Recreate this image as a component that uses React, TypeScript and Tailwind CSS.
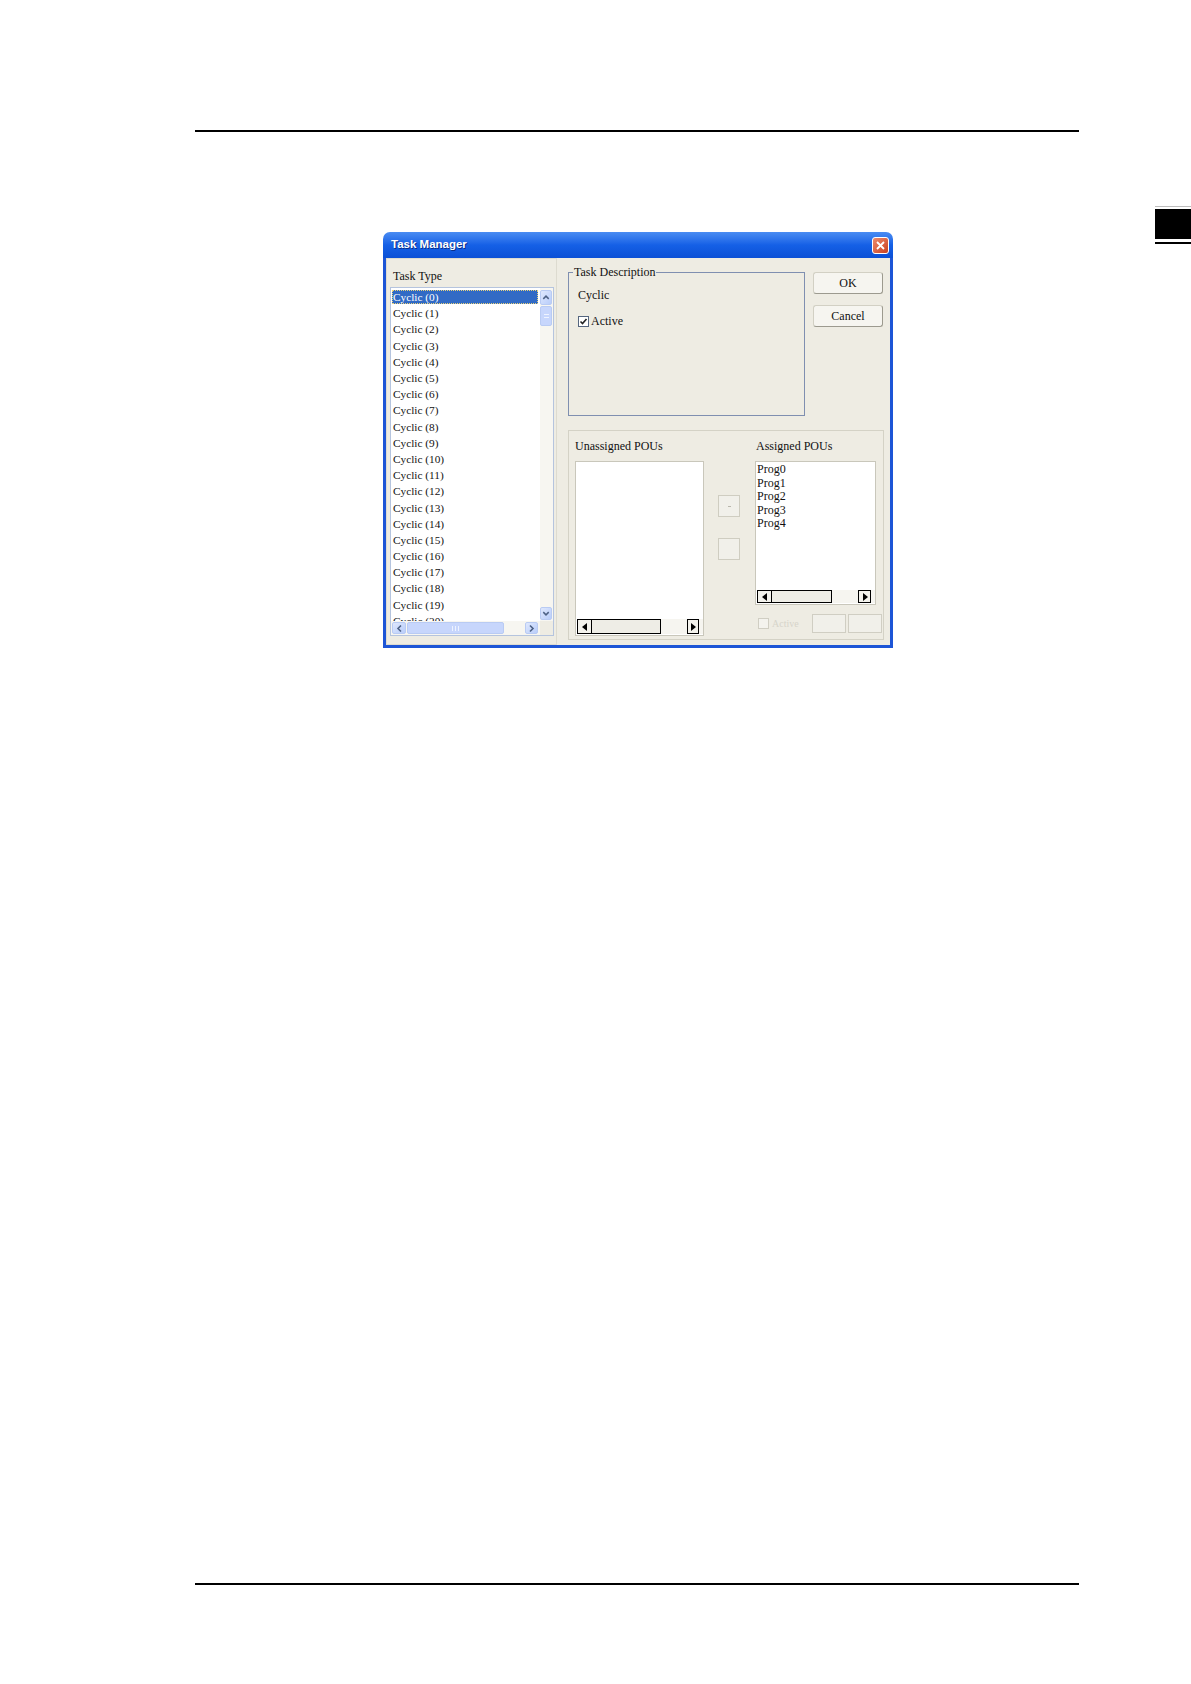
import React from 'react';

const serif = { fontFamily: '"Liberation Serif", "Times New Roman", serif' };
const rows = Array.from({ length: 21 }, (_, i) => `Cyclic (${i})`);
const progs = ['Prog0', 'Prog1', 'Prog2', 'Prog3', 'Prog4'];

function XpArrow({ dir }: { dir: 'up' | 'down' | 'left' | 'right' }) {
  const d = {
    up: 'M2.5 7 L5.5 4 L8.5 7',
    down: 'M2.5 4 L5.5 7 L8.5 4',
    left: 'M7 2.5 L4 5.5 L7 8.5',
    right: 'M4 2.5 L7 5.5 L4 8.5',
  }[dir];
  return (
    <svg width="11" height="11" viewBox="0 0 11 11">
      <path d={d} fill="none" stroke="#4d6185" strokeWidth="1.6" />
    </svg>
  );
}

function XpBtn({ dir, className }: { dir: 'up' | 'down' | 'left' | 'right'; className: string }) {
  return (
    <div className={`flex items-center justify-center rounded-[2px] border border-[#b9cbf3] bg-gradient-to-br from-[#dfe8fd] to-[#b9cdfa] ${className}`}>
      <XpArrow dir={dir} />
    </div>
  );
}

function Tri({ dir }: { dir: 'left' | 'right' }) {
  return (
    <svg width="6" height="8" viewBox="0 0 6 8">
      <path d={dir === 'left' ? 'M5 0 L0 4 L5 8 Z' : 'M1 0 L6 4 L1 8 Z'} fill="#000" />
    </svg>
  );
}

function ClassicHScroll({ thumb, right, h }: { thumb: string; right: string; h: string }) {
  return (
    <div className={`flex items-stretch ${h} bg-[#f6f5f0]`}>
      <div className="flex w-[15px] items-center justify-center border border-black bg-[#f3f2ec]">
        <Tri dir="left" />
      </div>
      <div className={`${thumb} border border-l-0 border-black bg-[#eeede6]`} />
      <div className="flex-1" />
      <div className={`flex ${right} items-center justify-center border border-black bg-[#f3f2ec]`}>
        <Tri dir="right" />
      </div>
      <div className="w-[4px]" />
    </div>
  );
}

function TaskTypeList() {
  return (
    <div className="grid h-[349px] w-[164px] grid-cols-[1fr_13px] grid-rows-[1fr_14px] border border-[#b5c4de] bg-white">
      <div className="overflow-hidden pl-[1px] pt-[1px] text-[11.3px] text-[#111]" style={serif}>
        {rows.map((r, i) => (
          <div key={r} className="flex h-[16.2px] items-center">
            {i === 0 ? (
              <div className="mr-[2px] flex h-[14px] w-full items-center border border-dotted border-[#e9d27a] bg-[#316ac5] text-white">
                {r}
              </div>
            ) : (
              <div className="pl-[1px] leading-[14px]">{r}</div>
            )}
          </div>
        ))}
      </div>
      <div className="flex flex-col bg-[#f7f6f1] pt-[2px]">
        <XpBtn dir="up" className="h-[15px] w-[12px]" />
        <div className="mt-[1px] flex h-[20px] w-[12px] flex-col items-center justify-center gap-[2px] rounded-[2px] border border-[#b9cbf3] bg-[#c7d6fc]">
          <div className="h-px w-[5px] bg-[#eef3ff]" />
          <div className="h-px w-[5px] bg-[#eef3ff]" />
        </div>
        <div className="flex-1" />
        <XpBtn dir="down" className="mb-[1px] h-[13px] w-[12px]" />
      </div>
      <div className="flex items-stretch bg-[#f7f6f1] py-[1px]">
        <XpBtn dir="left" className="ml-[1px] w-[14px]" />
        <div className="ml-[1px] flex w-[97px] items-center justify-center gap-[2px] rounded-[2px] border border-[#b9cbf3] bg-[#c7d6fc]">
          <div className="h-[5px] w-px bg-[#eef3ff]" />
          <div className="h-[5px] w-px bg-[#eef3ff]" />
          <div className="h-[5px] w-px bg-[#eef3ff]" />
        </div>
        <div className="flex-1" />
        <XpBtn dir="right" className="mr-[2px] w-[13px]" />
      </div>
      <div className="bg-[#eeece3]" />
    </div>
  );
}

function XpButton({ label, className }: { label: string; className: string }) {
  return (
    <div
      className={`flex h-[22px] w-[70px] items-center justify-center rounded-[3px] border border-[#d2d0c4] border-b-[#9c9a8f] border-r-[#9c9a8f] bg-[#f6f5f0] text-[12px] text-[#111] ${className}`}
      style={serif}
    >
      {label}
    </div>
  );
}

function TaskManagerDialog() {
  return (
    <div className="flex h-[416px] w-[510px] flex-col">
      <div className="flex h-[26px] items-center justify-between rounded-t-[7px] bg-gradient-to-b from-[#4a8cf2] via-[#1560e6] to-[#0b50d6] pl-[8px] pr-[4px]">
        <span
          className="text-[11.5px] font-bold text-white [text-shadow:1px_1px_0_#0a2f8a]"
          style={{ fontFamily: '"Liberation Sans", Arial, sans-serif' }}
        >
          Task Manager
        </span>
        <div className="flex h-[17px] w-[17px] items-center justify-center rounded-[3px] border border-white bg-gradient-to-br from-[#ee8a6c] to-[#c9401c]">
          <svg width="9" height="9" viewBox="0 0 9 9">
            <path d="M1 1 L8 8 M8 1 L1 8" stroke="#fff" strokeWidth="1.8" />
          </svg>
        </div>
      </div>
      <div className="flex flex-1 border-x-[3px] border-b-[3px] border-[#1d55d6] bg-[#eeece3]">
        <div className="flex w-[171px] flex-col border border-[#dddbd0] pl-[3px] pt-[9px]">
          <div className="h-[16px] pl-[3px] text-[12px] leading-[16px] text-[#111]" style={serif}>
            Task Type
          </div>
          <div className="mt-[3px]">
            <TaskTypeList />
          </div>
        </div>
        <div className="flex flex-1 flex-col pl-[11px] pt-[6px]">
          <div className="flex items-start gap-[8px]">
            <fieldset className="h-[152px] w-[237px] border border-[#7f8fb0] pl-[9px]">
              <legend className="-ml-[5px] px-[1px] text-[12px] leading-[16px] text-[#111]" style={serif}>
                Task Description
              </legend>
              <div className="pt-[7px] text-[12px] leading-[16px] text-[#111]" style={serif}>
                Cyclic
              </div>
              <div className="mt-[10px] flex h-[16px] items-center gap-[2px]">
                <div className="flex h-[11px] w-[11px] items-center justify-center border border-[#55667f] bg-white">
                  <svg width="9" height="9" viewBox="0 0 9 9">
                    <path d="M1.5 4.5 L3.5 6.5 L7.5 2" fill="none" stroke="#222" strokeWidth="1.6" />
                  </svg>
                </div>
                <span className="text-[12px] leading-[16px] text-[#111]" style={serif}>
                  Active
                </span>
              </div>
            </fieldset>
            <div className="flex flex-col">
              <XpButton label="OK" className="mt-[8px]" />
              <XpButton label="Cancel" className="mt-[11px]" />
            </div>
          </div>
          <div className="mt-[14px] flex h-[210px] w-[316px] border border-[#d4d2c6] pl-[6px] pt-[7px]">
            <div className="flex w-[129px] flex-col">
              <div className="h-[16px] text-[12px] leading-[16px] text-[#111]" style={serif}>
                Unassigned POUs
              </div>
              <div className="mt-[7px] flex h-[175px] flex-col justify-end border border-[#c9c7bb] bg-white pb-[1px] pl-[1px]">
                <ClassicHScroll thumb="w-[69px]" right="w-[12px]" h="h-[15px]" />
              </div>
            </div>
            <div className="ml-[14px] flex w-[22px] flex-col pt-[57px]">
              <div className="flex h-[22px] w-[22px] items-center justify-center border border-[#cfcdc1] bg-[#f1f0ea]">
                <div className="h-px w-[3px] bg-[#b9b7ac]" />
              </div>
              <div className="mt-[21px] h-[22px] w-[22px] border border-[#cfcdc1] bg-[#f1f0ea]" />
            </div>
            <div className="ml-[15px] flex w-[128px] flex-col">
              <div className="h-[16px] pl-[1px] text-[12px] leading-[16px] text-[#111]" style={serif}>
                Assigned POUs
              </div>
              <div className="mt-[7px] flex h-[144px] w-[121px] flex-col border border-[#c9c7bb] bg-white pb-[1px] pl-[1px]">
                <div className="flex-1 pt-[1px] text-[12px] leading-[13.5px] text-[#111]" style={serif}>
                  {progs.map((p) => (
                    <div key={p}>{p}</div>
                  ))}
                </div>
                <ClassicHScroll thumb="w-[60px]" right="w-[13px]" h="h-[13px]" />
              </div>
              <div className="mt-[9px] flex h-[19px] items-center">
                <div className="ml-[3px] h-[11px] w-[11px] border border-[#d0cec3] bg-[#f4f3ee]" />
                <span className="ml-[3px] text-[10px] text-[#d6d4ca]" style={serif}>
                  Active
                </span>
                <div className="ml-auto h-[19px] w-[34px] border border-[#d0cec3] bg-[#f1f0ea]" />
                <div className="ml-[2px] mr-[1px] h-[19px] w-[34px] border border-[#d0cec3] bg-[#f1f0ea]" />
              </div>
            </div>
          </div>
        </div>
      </div>
    </div>
  );
}

export default function App() {
  return (
    <div className="flex h-[1684px] w-[1191px] flex-col bg-white">
      <div className="ml-[195px] mt-[130px] h-[2px] w-[884px] bg-black" />
      <div className="mt-[74px] flex items-start">
        <div className="ml-[383px] mt-[26px]">
          <TaskManagerDialog />
        </div>
        <div className="ml-auto flex w-[36px] flex-col">
          <div className="h-px bg-[#bdbdbd]" />
          <div className="mt-[2px] h-[30px] bg-black" />
          <div className="mt-[3px] h-[2px] bg-black" />
        </div>
      </div>
      <div className="flex-1" />
      <div className="mb-[99px] ml-[195px] h-[2px] w-[884px] bg-black" />
    </div>
  );
}
